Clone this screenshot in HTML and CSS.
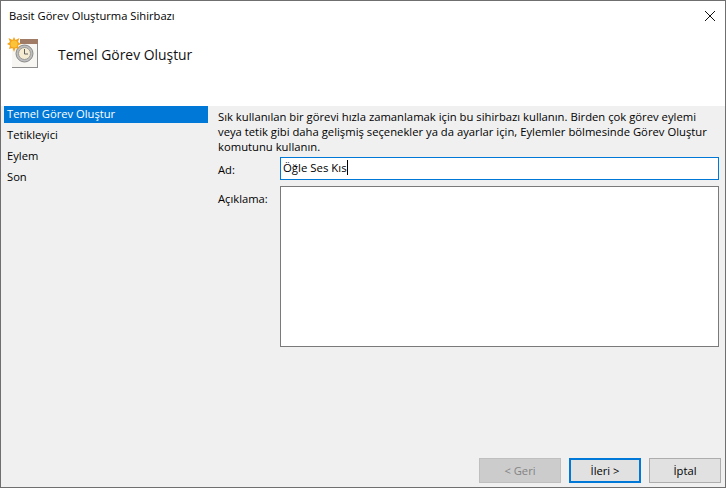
FILE: index.html
```html
<!DOCTYPE html>
<html lang="tr">
<head>
    <meta charset="UTF-8">
    <meta name="viewport" content="width=device-width, initial-scale=1.0">
    <title>Basit Görev Oluşturma Sihirbazı</title>
    <link rel="stylesheet" href="styles.css">
</head>
<body>
    <div class="window">
        <div class="title-bar">
            <span class="title-text">Basit Görev Oluşturma Sihirbazı</span>
            <svg class="close-icon" width="10" height="10" viewBox="0 0 10 10">
                <path d="M0 0L10 10M10 0L0 10" stroke="#111" stroke-width="1" fill="none"/>
            </svg>
        </div>
        <div class="header">
            <svg class="task-icon" width="34" height="34" viewBox="0 0 34 34">
                <path d="M6 5H32V32H6z" fill="#f7f6f2"/>
                <path d="M31 8H32V32H6V31H31z" fill="#8e8e8e"/>
                <path d="M14 3H32V8H14z" fill="#a07c66"/>
                <circle cx="18.500" cy="17.500" r="8.500" fill="#bdbdbd" stroke="#8a8a8a"/>
                <circle cx="18.500" cy="17.500" r="6" fill="#f5ecd2" stroke="#9a9a9a"/>
                <path d="M18.500 13V18H22" stroke="#5f5f5f" stroke-width="1" fill="none"/>
                <path d="M8 1L9.500 4L13.500 2L12 6L15 8L12 9.500L13 13L9.500 12L8 16L6.500 12L3 13L4 9.500L1 8L4 6L2.500 2L6.500 4z" fill="#f5a31a"/>
                <circle cx="8" cy="8" r="3.500" fill="#fbc33a"/>
            </svg>
            <h1 class="header-title">Temel Görev Oluştur</h1>
        </div>
        <div class="content">
            <ul class="steps">
                <li class="step step-active">Temel Görev Oluştur</li>
                <li class="step">Tetikleyici</li>
                <li class="step">Eylem</li>
                <li class="step">Son</li>
            </ul>
            <div class="main">
                <p class="intro">Sık kullanılan bir görevi hızla zamanlamak için bu sihirbazı kullanın. Birden çok görev eylemi veya tetik gibi daha gelişmiş seçenekler ya da ayarlar için, Eylemler bölmesinde Görev Oluştur komutunu kullanın.</p>
                <div class="form-row name-row">
                    <label class="form-label">Ad:</label>
                    <div class="text-input">Öğle Ses Kıs<span class="caret"></span></div>
                </div>
                <div class="form-row desc-row">
                    <label class="form-label desc-label">Açıklama:</label>
                    <div class="text-area"></div>
                </div>
                <div class="buttons">
                    <button class="btn btn-disabled">&lt; Geri</button>
                    <button class="btn btn-default">İleri &gt;</button>
                    <button class="btn">İptal</button>
                </div>
            </div>
        </div>
    </div>
</body>
</html>
```

FILE: styles.css
```css
html, body {
    margin: 0;
    padding: 0;
}
body {
    width: 726px;
    height: 488px;
    overflow: hidden;
    font-family: "Open Sans", "Noto Sans", sans-serif;
    font-size: 11.2px;
    color: #000;
    background-color: #fff;
}
.window {
    box-sizing: border-box;
    width: 726px;
    height: 488px;
    border: 1px solid #6f6f6f;
    display: flex;
    flex-direction: column;
    background-color: #fff;
}
.title-bar {
    height: 29px;
    padding: 0 10px 0 8px;
    display: flex;
    align-items: center;
    justify-content: space-between;
    flex: none;
}
.title-text {
    line-height: 16px;
}
.close-icon {
    display: block;
}
.header {
    height: 76px;
    flex: none;
    display: flex;
    align-items: flex-start;
    padding-left: 5px;
    box-sizing: border-box;
}
.task-icon {
    display: block;
    margin-top: 6px;
    flex: none;
}
.header-title {
    margin: 15px 0 0 18px;
    font-size: 13.9px;
    font-weight: 400;
    line-height: 20px;
    color: #111;
}
.content {
    flex: 1;
    display: flex;
    background-color: #f0f0f0;
    min-height: 0;
}
.steps {
    list-style: none;
    margin: 0;
    padding: 0 0 0 3px;
    width: 204px;
    flex: none;
}
.step {
    height: 21px;
    line-height: 16px;
    padding-left: 3px;
}
.step-active {
    height: 17px;
    margin-bottom: 4px;
    background-color: #0078d7;
    color: #fff;
}
.main {
    flex: 1;
    display: flex;
    flex-direction: column;
    padding: 3px 6px 4px 10px;
    min-width: 0;
}
.intro {
    margin: 0;
    font-size: 11.27px;
    line-height: 15px;
    height: 45px;
    width: 495px;
}
.form-row {
    display: flex;
}
.name-row {
    margin-top: 3px;
    height: 23px;
    align-items: center;
}
.name-row .form-label {
    padding-top: 2px;
}
.desc-row {
    margin-top: 6px;
    height: 161px;
}
.form-label {
    width: 62px;
    flex: none;
}
.desc-label {
    margin-top: 5px;
}
.text-input {
    box-sizing: border-box;
    flex: 1;
    height: 23px;
    font-size: 11.4px;
    line-height: 20px;
    padding-left: 2px;
    border: 1px solid #0078d7;
    background-color: #fff;
}
.caret {
    display: inline-block;
    width: 1px;
    height: 15px;
    background-color: #000;
    vertical-align: -3px;
}
.text-area {
    box-sizing: border-box;
    flex: 1;
    border: 1px solid #7a7a7a;
    background-color: #fff;
}
.buttons {
    margin-top: auto;
    margin-right: -2px;
    display: flex;
    justify-content: flex-end;
    gap: 8px;
}
.btn {
    box-sizing: border-box;
    width: 72px;
    height: 25px;
    padding: 0;
    border: 1px solid #adadad;
    background-color: #e1e1e1;
    font-family: inherit;
    font-size: inherit;
    color: #000;
}
.btn-disabled {
    width: 82px;
    border-color: #bfbfbf;
    background-color: #cccccc;
    color: #838383;
}
.btn-default {
    border: 2px solid #0078d7;
}
```
